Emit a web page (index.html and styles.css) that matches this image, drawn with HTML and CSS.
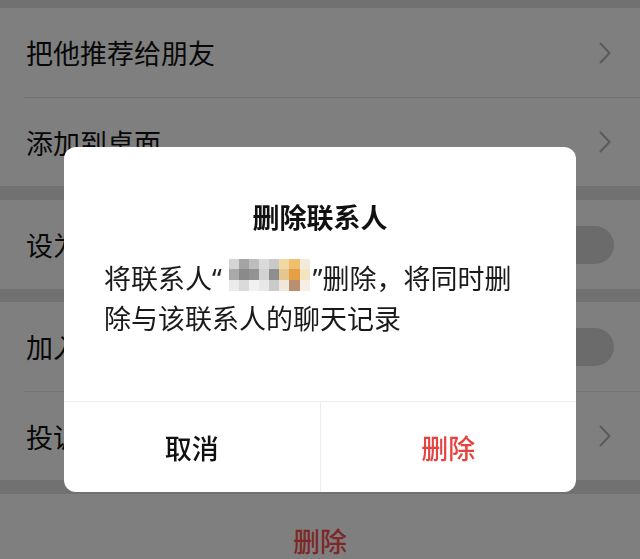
FILE: index.html
```html
<!DOCTYPE html>
<html lang="zh-CN">
<head>
<meta charset="utf-8">
<title>删除联系人</title>
<link rel="stylesheet" href="styles.css">
</head>
<body>
<div class="screen">
  <div class="band band-top"></div>
  <div class="group">
    <div class="cell"><span class="label">把他推荐给朋友</span><svg class="chev" viewBox="0 0 12 22" width="12" height="22"><polyline points="1.5,1.5 10.5,11 1.5,20.5"/></svg></div>
    <div class="cell"><span class="label">添加到桌面</span><svg class="chev" viewBox="0 0 12 22" width="12" height="22"><polyline points="1.5,1.5 10.5,11 1.5,20.5"/></svg></div>
  </div>
  <div class="band"></div>
  <div class="group">
    <div class="cell"><span class="label">设为星标朋友</span><span class="toggle"></span></div>
  </div>
  <div class="band band-thin"></div>
  <div class="group">
    <div class="cell"><span class="label">加入黑名单</span><span class="toggle"></span></div>
    <div class="cell"><span class="label">投诉</span><svg class="chev" viewBox="0 0 12 22" width="12" height="22"><polyline points="1.5,1.5 10.5,11 1.5,20.5"/></svg></div>
  </div>
  <div class="band"></div>
  <div class="group">
    <div class="cell cell-danger">删除</div>
  </div>
</div>
<div class="mask"></div>
<div class="dialog">
  <div class="dialog-title">删除联系人</div>
  <div class="dialog-body">将联系人<span class="q">“</span><span class="name"><span class="mosaic"><i class="m1"></i><i class="m2"></i><i class="m3"></i><i class="m4"></i><i class="m5"></i><i class="m6"></i><i class="m7"></i><i class="m8"></i><i class="m9"></i><i class="m10"></i><i class="m11"></i><i class="m12"></i><i class="m13"></i><i class="m14"></i><i class="m15"></i><i class="m16"></i><i class="m17"></i><i class="m18"></i><i class="m19"></i><i class="m20"></i><i class="m21"></i><i class="m22"></i><i class="m23"></i><i class="m24"></i></span></span><span class="q">”</span>删除，将同时删<br>除与该联系人的聊天记录</div>
  <div class="dialog-footer">
    <div class="btn btn-cancel">取消</div>
    <div class="btn btn-danger">删除</div>
  </div>
</div>
</body>
</html>
```

FILE: styles.css
```css
html, body {
  margin: 0;
  padding: 0;
  width: 640px;
  height: 559px;
  overflow: hidden;
  background: #e3e3e3;
  font-family: "Noto Sans CJK SC", "Noto Sans", sans-serif;
}

.screen {
  display: flex;
  flex-direction: column;
  width: 640px;
}

.band {
  height: 14px;
  background: #e3e3e3;
}
.band-top {
  height: 8px;
}
.band-thin {
  height: 13px;
}

.group {
  background: #ffffff;
}

.cell {
  box-sizing: border-box;
  display: flex;
  align-items: center;
  justify-content: space-between;
  height: 89px;
  margin-left: 24px;
  padding-left: 2px;
  padding-right: 26px;
  font-size: 27px;
  color: #111;
}
.cell + .cell {
  border-top: 1px solid #e8e8e8;
}

.chev {
  margin-right: 3px;
  fill: none;
  stroke: #b4b4b4;
  stroke-width: 2;
  stroke-linecap: round;
  stroke-linejoin: round;
}

.toggle {
  width: 96px;
  height: 38px;
  border-radius: 19px;
  background: #d6d6d6;
}

.cell-danger {
  display: block;
  text-align: center;
  margin-left: 0;
  padding: 32px 0 0;
  height: 65px;
  line-height: 30px;
  color: #fa5151;
  font-weight: 500;
}

.mask {
  position: fixed;
  inset: 0;
  background: rgba(0, 0, 0, 0.5);
}

.dialog {
  position: fixed;
  left: 64px;
  top: 147px;
  width: 512px;
  height: 345px;
  background: #fff;
  border-radius: 12px;
  display: flex;
  flex-direction: column;
  overflow: hidden;
}

.dialog-title {
  padding-top: 51px;
  text-align: center;
  font-size: 27px;
  line-height: 38px;
  font-weight: 700;
  color: #111;
}

.dialog-body {
  margin-top: 22px;
  padding: 0 24px 0 40px;
  font-size: 27px;
  line-height: 39px;
  color: #1a1a1a;
}

.q {
  font-family: "Noto Sans", sans-serif;
  color: #222;
}

.name {
  display: inline-block;
  position: relative;
  width: 91px;
  height: 20px;
  vertical-align: middle;
}

.mosaic {
  position: absolute;
  left: 7px;
  top: -13px;
  width: 81px;
  height: 32px;
  display: grid;
  grid-template-columns: repeat(8, 1fr);
  grid-template-rows: repeat(3, 1fr);
}
.mosaic i { display: block; }
.m1 { background: #d4d4d4; }
.m2 { background: #a4a4a4; }
.m3 { background: #bdbdbd; }
.m4 { background: #dadada; }
.m5 { background: #c9c9c9; }
.m6 { background: #f1d9a4; }
.m7 { background: #efbf6e; }
.m8 { background: #f3ead9; }
.m9 { background: #a9a9a9; }
.m10 { background: #8a8a8a; }
.m11 { background: #939393; }
.m12 { background: #d2d2d2; }
.m13 { background: #8e8e8e; }
.m14 { background: #e6c690; }
.m15 { background: #e6a043; }
.m16 { background: #f4e4c2; }
.m17 { background: #ebebeb; }
.m18 { background: #dadada; }
.m19 { background: #f1f1f1; }
.m20 { background: #e8e8e8; }
.m21 { background: #cacaca; }
.m22 { background: #efe6dc; }
.m23 { background: #b98f6f; }
.m24 { background: #f7efe6; }

.dialog-footer {
  margin-top: auto;
  height: 90px;
  border-top: 1px solid #ededed;
  display: flex;
}

.btn {
  flex: 1;
  display: flex;
  align-items: center;
  justify-content: center;
  font-size: 27px;
  font-weight: 500;
}
.btn + .btn {
  border-left: 1px solid #ededed;
}
.btn-cancel { color: #111; }
.btn-danger { color: #e64340; }
```
